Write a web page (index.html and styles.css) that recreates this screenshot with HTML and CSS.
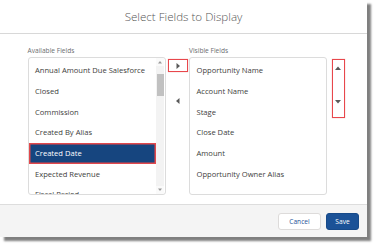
FILE: index.html
```html
<!DOCTYPE html>
<html>
<head>
<meta charset="utf-8">
<link rel="stylesheet" href="styles.css">
</head>
<body>
<div class="modal">
  <header class="hd">Select Fields to Display</header>
  <div class="bd">
    <div class="col">
      <div class="lbl">Available Fields</div>
      <div class="box">
        <ul class="list">
          <li>Annual Amount Due Salesforce</li>
          <li>Closed</li>
          <li>Commission</li>
          <li>Created By Alias</li>
          <li class="sel">Created Date</li>
          <li>Expected Revenue</li>
          <li>Fiscal Period</li>
        </ul>
        <div class="sb">
          <svg class="sb-arr" width="8" height="8" viewBox="0 0 8 8"><path d="M2 5.5 L4 3 L6 5.5 Z" fill="#9a9a9a"/></svg>
          <div class="thumb"></div>
          <div class="sb-fill"></div>
          <svg class="sb-arr" width="8" height="8" viewBox="0 0 8 8"><path d="M2 2.5 L4 5 L6 2.5 Z" fill="#9a9a9a"/></svg>
        </div>
      </div>
    </div>
    <div class="move">
      <div class="mv hl"><svg width="6" height="8" viewBox="0 0 6 8"><path d="M1.5 1 L5 4 L1.5 7 Z" fill="#5a5a5a"/></svg></div>
      <div class="mv"><svg width="6" height="8" viewBox="0 0 6 8"><path d="M4.5 1 L1 4 L4.5 7 Z" fill="#5a5a5a"/></svg></div>
    </div>
    <div class="col">
      <div class="lbl">Visible Fields</div>
      <div class="box">
        <ul class="list">
          <li>Opportunity Name</li>
          <li>Account Name</li>
          <li>Stage</li>
          <li>Close Date</li>
          <li>Amount</li>
          <li>Opportunity Owner Alias</li>
        </ul>
      </div>
    </div>
    <div class="order">
      <div class="ord hl">
        <svg width="8" height="6" viewBox="0 0 8 6"><path d="M1 5 L4 1.5 L7 5 Z" fill="#5a5a5a"/></svg>
        <svg width="8" height="6" viewBox="0 0 8 6"><path d="M1 1 L4 4.5 L7 1 Z" fill="#5a5a5a"/></svg>
      </div>
    </div>
  </div>
  <footer class="ft">
    <button class="btn cancel">Cancel</button>
    <button class="btn save">Save</button>
  </footer>
</div>
</body>
</html>
```
FILE: styles.css
```css
html, body {
  margin: 0;
  padding: 0;
  background: #ffffff;
}
body {
  font-family: "Open Sans", "Liberation Sans", sans-serif;
  color: #3e3e3c;
  width: 377px;
  height: 247px;
  overflow: hidden;
}
.modal {
  width: 367px;
  height: 237px;
  background: #ffffff;
  box-shadow: 4px 4px 2px rgba(0, 0, 0, 0.5);
  display: flex;
  flex-direction: column;
}
.hd {
  height: 33px;
  border-bottom: 1px solid #d8d8d8;
  display: flex;
  align-items: center;
  justify-content: center;
  font-size: 11.6px;
  font-weight: 300;
  color: #555555;
  box-sizing: content-box;
}
.bd {
  flex: 1;
  display: flex;
  padding: 12px 0 0 27.5px;
  box-sizing: border-box;
}
.col {
  width: 138px;
  display: flex;
  flex-direction: column;
}
.lbl {
  font-size: 6.6px;
  line-height: 9px;
  height: 9px;
  color: #6b6d70;
  margin-bottom: 2px;
}
.box {
  height: 138px;
  border: 1px solid #dcdcdc;
  border-radius: 3px;
  box-sizing: border-box;
  display: flex;
  overflow: hidden;
  background: #fff;
}
.list {
  list-style: none;
  margin: 0;
  padding: 2.3px 0 0 0;
  flex: 1;
  overflow: hidden;
}
.list li {
  height: 20.7px;
  line-height: 20.7px;
  padding-left: 6.5px;
  font-size: 7.6px;
  white-space: nowrap;
  color: #3e3e3c;
}
.list li.sel {
  background: #16457f;
  color: #ffffff;
  box-shadow: inset 0 0 0 1.5px #e2484c;
  margin-right: 0.5px;
}
.sb {
  width: 8px;
  display: flex;
  flex-direction: column;
  background: #f3f3f3;
  margin-right: 0.5px;
}
.sb-arr {
  display: block;
  flex: none;
  background: #fafafa;
}
.thumb {
  height: 22px;
  margin: 8px 0.5px 0;
  background: #c1c1c1;
}
.sb-fill {
  flex: 1;
}
.move {
  width: 23.5px;
  display: flex;
  flex-direction: column;
  align-items: center;
  padding-top: 13px;
  gap: 22px;
}
.mv {
  width: 20px;
  height: 13px;
  box-sizing: border-box;
  display: flex;
  align-items: center;
  justify-content: center;
  margin-left: 1px;
}
.hl {
  border: 1.5px solid #e8474c;
  box-shadow: 0 0 1px rgba(232, 71, 76, 0.5);
}
.order {
  padding: 13px 0 0 4.5px;
}
.ord {
  width: 13.5px;
  height: 59px;
  box-sizing: border-box;
  display: flex;
  flex-direction: column;
  align-items: center;
  padding-top: 5px;
  gap: 28px;
}
.ord svg, .mv svg {
  display: block;
}
.ft {
  height: 32px;
  border-top: 1px solid #dddddd;
  background: #f4f4f4;
  display: flex;
  justify-content: flex-end;
  align-items: center;
  padding: 0 8px 0 0;
  gap: 5px;
  box-sizing: content-box;
}
.btn {
  font-family: "Open Sans", "Liberation Sans", sans-serif;
  font-size: 6.6px;
  height: 17px;
  border-radius: 3px;
  padding: 0;
  box-sizing: border-box;
  display: flex;
  align-items: center;
  justify-content: center;
}
.cancel {
  width: 43px;
  background: #ffffff;
  border: 1px solid #dddbda;
  color: #1b5297;
}
.save {
  width: 33px;
  background: #1b5297;
  border: 1px solid #174a89;
  color: #ffffff;
}
```
